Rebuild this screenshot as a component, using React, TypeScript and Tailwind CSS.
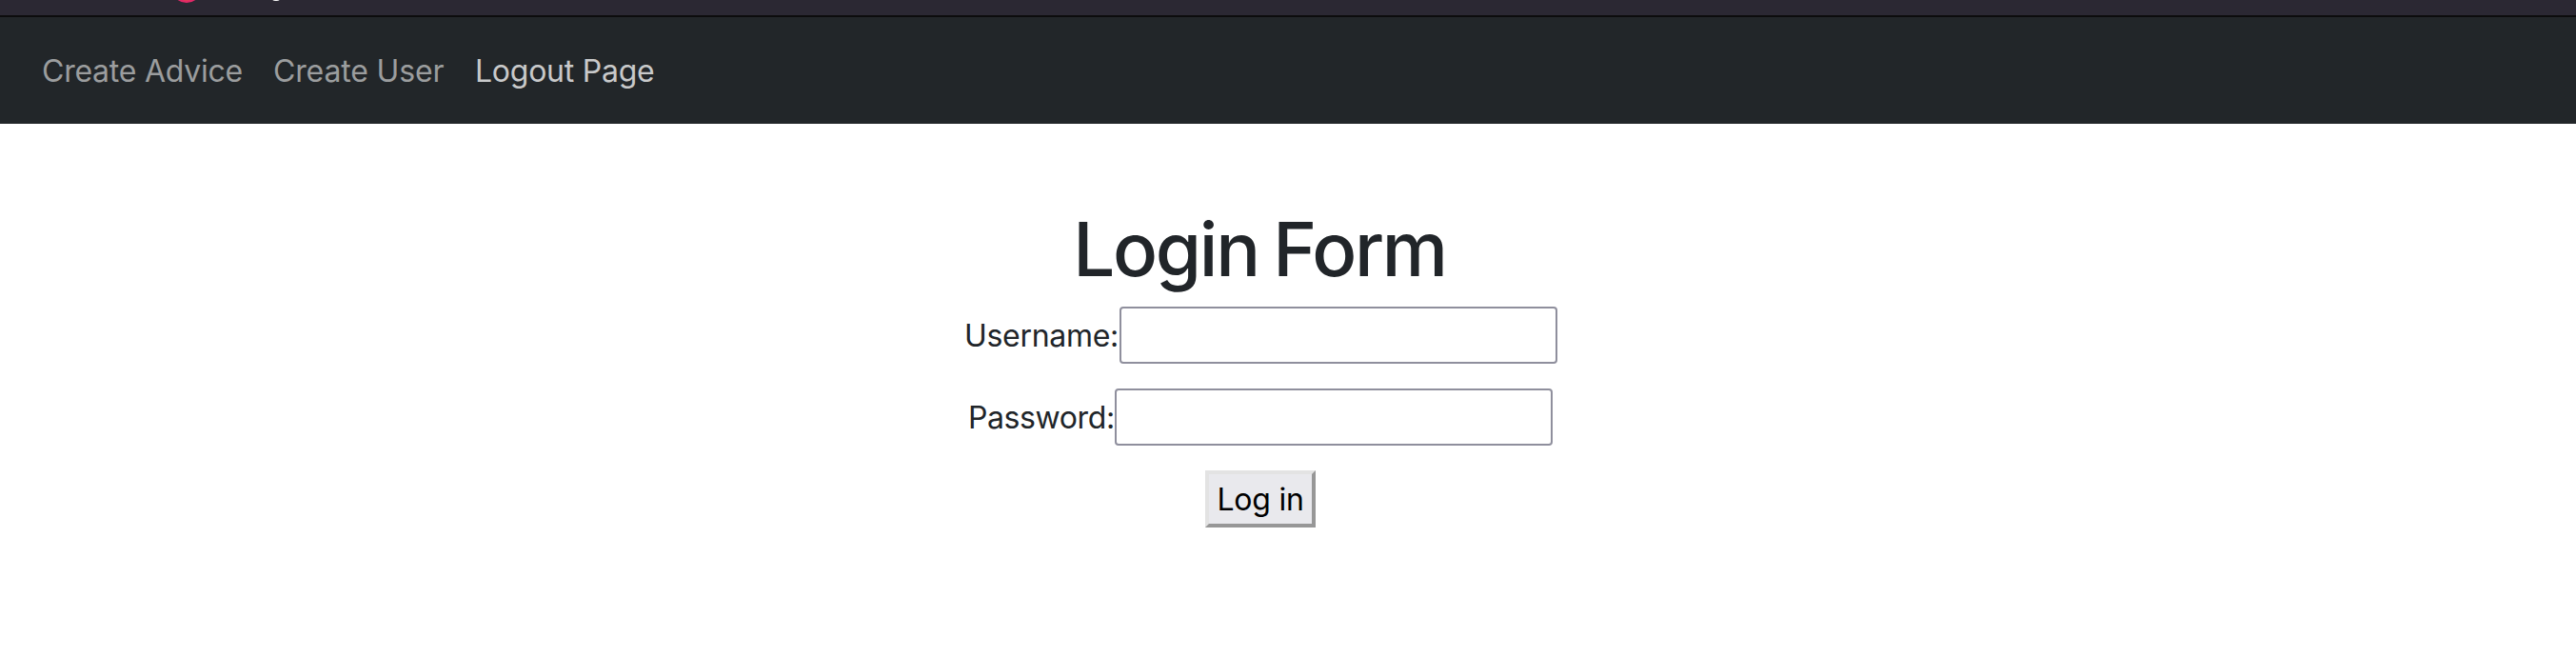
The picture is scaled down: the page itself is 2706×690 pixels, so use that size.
export default function App() {
  return (
    <div className="h-[690px] w-full overflow-hidden bg-white font-['Inter',sans-serif] text-[32px] leading-[48px] tracking-[-0.25px] text-[#212529]">
      <div className="h-[18px] overflow-hidden border-b-2 border-[#0c0c0d] bg-[#2b2833]">
        <svg width="320" height="16" viewBox="0 0 320 16" className="block">
          <circle cx="196" cy="-13" r="16" fill="#e22868" />
          <circle cx="196" cy="-9" r="10" fill="#e33c55" />
          <ellipse cx="290" cy="-1" rx="4" ry="2" fill="#fff" />
        </svg>
      </div>
      <nav className="flex h-[112px] items-center bg-[#222629] pl-11 pt-0.5 text-[#9b9d9e]">
        <a className="w-[243px] whitespace-nowrap">Create Advice</a>
        <a className="w-[212px] whitespace-nowrap tracking-[-0.15px]">Create User</a>
        <a className="whitespace-nowrap text-[#c8c9ca]">Logout Page</a>
      </nav>
      <main className="flex w-[2648px] flex-col items-center pt-[84px]">
        <h1 className="mb-4 h-[92px] whitespace-nowrap pr-0.5 text-[78px] font-medium leading-[95px] tracking-[-2.3px] [word-spacing:-3px]">Login Form</h1>
        <form className="flex flex-col items-center">
          <label className="mb-[26px] flex items-center">
            <span className="w-[164px] whitespace-nowrap pl-px pt-0.5 tracking-[-0.3px]">Username:</span>
            <input type="text" className="h-[60px] w-[460px] rounded-[4px] border-2 border-[#8f8f9d] bg-white px-1 outline-none" />
          </label>
          <label className="mb-[26px] flex items-center">
            <span className="w-[154px] whitespace-nowrap pt-0.5 tracking-[-0.4px]">Password:</span>
            <input type="password" className="h-[60px] w-[460px] rounded-[4px] border-2 border-[#8f8f9d] bg-white px-1 outline-none" />
          </label>
          <button type="button" className="h-[60px] w-[116px] whitespace-nowrap border-4 border-b-[#979797] border-l-[#e3e3e3] border-r-[#979797] border-t-[#e3e3e3] bg-[#e9e9ed] pt-0.5 leading-[50px] text-black">Log in</button>
        </form>
      </main>
    </div>
  );
}
